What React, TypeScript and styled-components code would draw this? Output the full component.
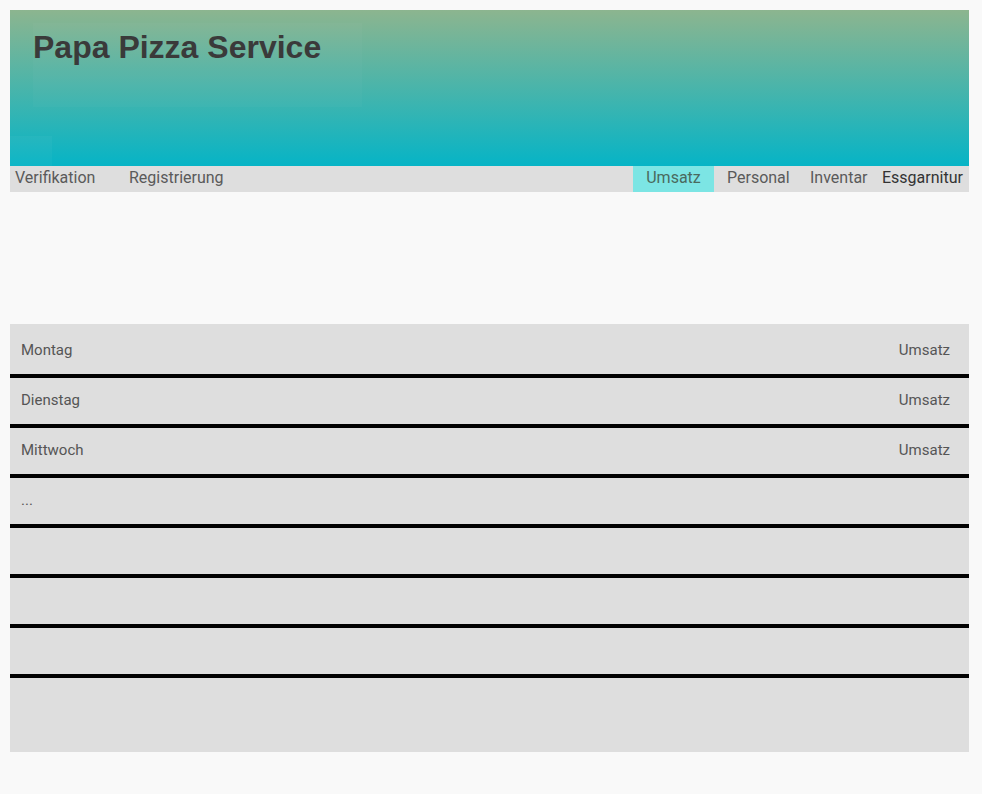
import styled, { createGlobalStyle } from "styled-components";

const GlobalStyle = createGlobalStyle`
  html, body {
    margin: 0;
    padding: 0;
    background: #f9f9f9;
  }
  body {
    padding: 10px 13px 0 10px;
    font-family: Roboto, "Liberation Sans", sans-serif;
  }
`;

const Header = styled.header`
  height: 156px;
  background: linear-gradient(to bottom, #8cb58f, #06b4c6);
  display: flex;
  flex-direction: column;
  justify-content: space-between;
`;

const TitleBox = styled.div`
  margin: 13px 0 0 23px;
  width: 329px;
  height: 84px;
  background: rgba(255, 255, 255, 0.025);
`;

const Title = styled.h1`
  margin: 0;
  padding-top: 6px;
  font-family: "Liberation Sans", Arial, sans-serif;
  font-size: 32px;
  font-weight: 700;
  color: #3a3a3a;
  line-height: 37px;
`;

const LogoBox = styled.div`
  width: 42px;
  height: 30px;
  background: rgba(255, 255, 255, 0.03);
`;

const Nav = styled.nav`
  height: 26px;
  background: #dedede;
  display: flex;
  align-items: stretch;
  font-size: 16px;
  line-height: 24px;
  color: #5a5a5a;
`;

const NavItem = styled.a<{ $active?: boolean; $dark?: boolean; $w?: number; $pl?: number }>`
  display: flex;
  align-items: center;
  justify-content: ${(p) => (p.$active ? "center" : "flex-start")};
  padding: 0 0 2px ${(p) => (p.$pl ?? 5)}px;
  width: ${(p) => (p.$w ? `${p.$w}px` : "auto")};
  box-sizing: border-box;
  white-space: nowrap;
  background: ${(p) => (p.$active ? "#7ce5e4" : "transparent")};
  color: ${(p) => (p.$active ? "#4a6a5e" : p.$dark ? "#333" : "#5a5a5a")};
`;

const Spacer = styled.div`
  flex: 1;
`;

const Gap = styled.div`
  height: 132px;
`;

const List = styled.div`
  background: #dedede;
  padding-top: 4px;
  padding-bottom: 28px;
`;

const Row = styled.div`
  height: 46px;
  border-bottom: 4px solid #000;
  display: flex;
  align-items: center;
  justify-content: space-between;
  padding: 0 19px 2px 11px;
  box-sizing: border-box;
  height: 50px;
  font-size: 15px;
  color: #555;
`;

const LastRow = styled.div`
  height: 46px;
`;

const rows = [
  { day: "Montag", value: "Umsatz" },
  { day: "Dienstag", value: "Umsatz" },
  { day: "Mittwoch", value: "Umsatz" },
  { day: "...", value: "" },
  { day: "", value: "" },
  { day: "", value: "" },
  { day: "", value: "" },
];

export default function App() {
  return (
    <>
      <GlobalStyle />
      <Header>
        <TitleBox>
          <Title>Papa Pizza Service</Title>
        </TitleBox>
        <LogoBox />
      </Header>
      <Nav>
        <NavItem $w={119}>Verifikation</NavItem>
        <NavItem $pl={0}>Registrierung</NavItem>
        <Spacer />
        <NavItem $active $w={81} $pl={0}>Umsatz</NavItem>
        <NavItem $w={91} $pl={13}>Personal</NavItem>
        <NavItem $w={77}>Inventar</NavItem>
        <NavItem $dark $w={87} $pl={0}>Essgarnitur</NavItem>
      </Nav>
      <Gap />
      <List>
        {rows.map((r, i) => (
          <Row key={i}>
            <span>{r.day}</span>
            <span>{r.value}</span>
          </Row>
        ))}
        <LastRow />
      </List>
    </>
  );
}
